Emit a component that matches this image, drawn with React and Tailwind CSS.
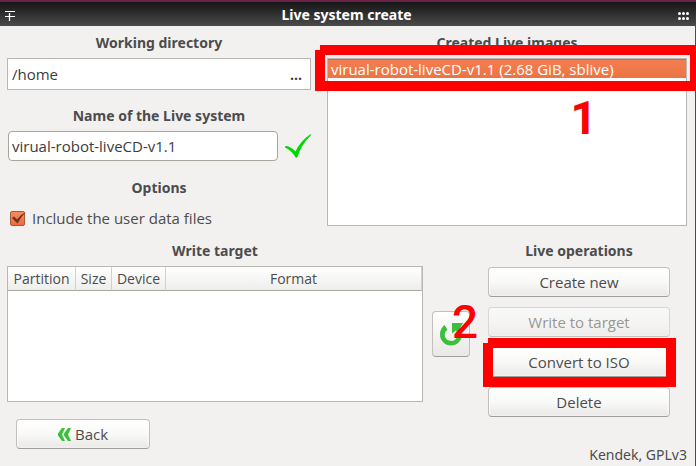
import { useState } from "react";

const buttonBase =
  "h-[30px] rounded border border-[#c3c0bb] border-b-[#a19e99] bg-linear-to-b from-white via-[#f9f9f8] to-[#e9e8e6] shadow-[inset_0_0_3px_#ffffff] text-[#4c4c4c]";

function Heading({ children, htmlFor, id }) {
  const Tag = htmlFor ? "label" : "h2";
  return (
    <Tag
      id={id}
      htmlFor={htmlFor}
      className="flex h-8 items-center justify-center font-['Noto_Sans',sans-serif] text-[14px] font-bold whitespace-nowrap"
    >
      {children}
    </Tag>
  );
}

function TitleBar() {
  return (
    <header className="border-t-2 border-[#6b2247]">
      <div className="flex h-6 items-center justify-between bg-linear-to-b from-[#161616] to-[#4b4b4b] pr-[7px] pl-[5px] text-white">
        <button aria-label="Window menu" className="mt-1">
          <svg width="10" height="10" viewBox="0 0 10 10" fill="none" stroke="currentColor" strokeWidth="1">
            <path d="M0 .5h10M0 5.500h10" />
            <path d="M4.500 2v8" strokeWidth="1.3" />
          </svg>
        </button>
        <h1 className="font-['Noto_Sans',sans-serif] text-[14px] font-bold">Live system create</h1>
        <button aria-label="Window grip" className="mt-1">
          <svg width="11" height="8" viewBox="0 0 11 8" fill="currentColor">
            <circle cx="1.5" cy="1.5" r="1.5" />
            <circle cx="5.5" cy="1.5" r="1.5" />
            <circle cx="9.5" cy="1.5" r="1.5" />
            <circle cx="1.5" cy="6.5" r="1.5" />
            <circle cx="5.5" cy="6.5" r="1.5" />
            <circle cx="9.5" cy="6.5" r="1.5" />
          </svg>
        </button>
      </div>
    </header>
  );
}

function Settings() {
  const [directory, setDirectory] = useState("/home");
  const [name, setName] = useState("virual-robot-liveCD-v1.1");
  return (
    <section>
      <Heading htmlFor="directory">Working directory</Heading>
      <div className="flex h-8 border border-[#bab8b3] bg-white text-[#3c3c3c]">
        <input
          id="directory"
          value={directory}
          onChange={(e) => setDirectory(e.target.value)}
          className="min-w-0 flex-1 px-1 text-[15px] outline-none"
        />
        <button aria-label="Browse" className="px-2 text-[14px] font-bold">
          ...
        </button>
      </div>
      <div className="mt-[9px]">
        <Heading htmlFor="name">Name of the Live system</Heading>
      </div>
      <div className="flex h-[30px] items-center gap-[7px] pl-px">
        <input
          id="name"
          value={name}
          onChange={(e) => setName(e.target.value)}
          className="h-full min-w-0 flex-1 rounded border border-[#a9a6a0] bg-white px-[3px] text-[15px] text-[#3c3c3c] outline-none"
        />
        <svg width="26" height="24" viewBox="0 0 26 24" fill="#00d800" className="shrink-0">
          <path d="M0 12.500Q1.500 11.500 3.500 12.500Q8 14.500 10.500 17.500Q15 7.500 25.500 0L26 1Q16 11 12.500 23L11 24Q6.500 16.500 0 13.500Z" />
        </svg>
      </div>
      <div className="mt-2.5">
        <Heading>Options</Heading>
      </div>
      <label className="flex h-[31px] items-center gap-[7px] pl-[3px] text-[15px]">
        <span className="grid size-[15px]">
          <input
            type="checkbox"
            defaultChecked
            className="peer col-start-1 row-start-1 size-[15px] appearance-none rounded-xs border border-[#a8583a] bg-white checked:bg-linear-to-b checked:from-[#f58a62] checked:to-[#ee6b3b]"
          />
          <svg
            viewBox="0 0 15 15"
            className="pointer-events-none col-start-1 row-start-1 size-[15px] overflow-visible opacity-0 peer-checked:opacity-100"
            fill="#6b3420"
          >
            <path d="M2 7L4 5.500L7 8.500Q10.500 3.500 16 1Q11 5.500 7.500 12.500Z" />
          </svg>
        </span>
        Include the user data files
      </label>
    </section>
  );
}

function LiveImages() {
  return (
    <section>
      <Heading id="images">Created Live images</Heading>
      <div className="relative">
        <ul
          role="listbox"
          aria-labelledby="images"
          className="h-[168px] border border-[#bab8b3] bg-white"
        >
          <li
            role="option"
            aria-selected="true"
            className="flex h-[19px] items-center border-t border-[#d96a3d] bg-linear-to-b from-[#f47e51] to-[#ec7443] pl-[3px] text-[15px] whitespace-nowrap text-white"
          >
            virual-robot-liveCD-v1.1 (2.68 GiB, sblive)
          </li>
        </ul>
        <div className="pointer-events-none absolute -top-[13px] -right-[13px] -left-3 h-[46px] border-10 border-[#ff0000] [clip-path:polygon(5px_0,100%_0,100%_100%,0_100%,0_5px,5px_5px)]" />
        <span className="pointer-events-none absolute top-[37px] right-[90px] font-[Roboto,sans-serif] text-[46px]/[46px] font-bold text-[#ff0000]">
          1
        </span>
      </div>
    </section>
  );
}

const headCell =
  "border-r border-b border-r-[#d3d1cd] border-b-[#a9a6a0] p-0 text-center font-normal";

function WriteTarget() {
  return (
    <section className="min-w-0 flex-1">
      <Heading id="target">Write target</Heading>
      <div className="h-[136px] border border-[#bab8b3] bg-white">
        <table aria-labelledby="target" className="w-full table-fixed border-separate border-spacing-0 text-[14px]/[20px]">
          <thead>
            <tr className="h-6 bg-linear-to-b from-white to-[#ededeb]">
              <th className={`${headCell} w-[68px]`}>Partition</th>
              <th className={`${headCell} w-9`}>Size</th>
              <th className={`${headCell} w-[54px]`}>Device</th>
              <th className={headCell}>Format</th>
            </tr>
          </thead>
        </table>
      </div>
    </section>
  );
}

function Operations() {
  return (
    <section className="w-[199px] shrink-0">
      <div className="w-[182px]">
        <Heading>Live operations</Heading>
        <div className="grid gap-2.5 pt-px text-[15px]">
          <button className={buttonBase}>Create new</button>
          <button disabled className={`${buttonBase} opacity-55`}>
            Write to target
          </button>
          <div className="relative grid">
            <button className={buttonBase}>Convert to ISO</button>
            <div className="pointer-events-none absolute -top-[9px] -right-1.5 -bottom-2.5 -left-[5px] border-10 border-[#ff0000] [clip-path:polygon(5px_0,100%_0,100%_100%,0_100%,0_5px,5px_5px)]" />
          </div>
          <button className={buttonBase}>Delete</button>
        </div>
      </div>
      <p className="mt-7 text-right font-['Noto_Sans',sans-serif] text-[14px]/[20px]">Kendek, GPLv3</p>
    </section>
  );
}

export default function App() {
  return (
    <div className="min-h-screen overflow-hidden bg-[#f2f1f0] font-['Open_Sans','Noto_Sans',sans-serif] text-[#4c4c4c]">
      <TitleBar />
      <main className="min-h-[440px] border-r border-[#4c4c4c] pr-2 pl-[7px]">
        <div className="grid grid-cols-[304fr_360fr] gap-4">
          <Settings />
          <LiveImages />
        </div>
        <div className="flex">
          <div className="flex min-w-0 flex-1 flex-col">
            <div className="flex gap-[9px]">
              <WriteTarget />
              <div className="relative flex items-center pt-8">
                <button
                  aria-label="Refresh"
                  className="flex h-[46px] w-[38px] items-center justify-center rounded border border-[#c3c0bb] border-b-[#a19e99] bg-linear-to-b from-white to-[#e9e8e6]"
                >
                  <svg width="24" height="24" viewBox="0 0 24 24">
                    <path d="M5.500 3A12 12 0 0 0 1 12.500A11 11 0 0 0 23 12.500Q23 9.500 21 6L24 1H13V11.500L17 8.500Q19 11 18 14.500A6.300 6.300 0 0 1 5.700 13Q5.700 9.500 8.500 7.500Z" fill="#3cc03c" />
                  </svg>
                </button>
                <span className="pointer-events-none absolute top-[65px] left-5 font-[Roboto,sans-serif] text-[46px]/[46px] font-medium text-[#ff0000]">
                  2
                </span>
              </div>
            </div>
            <div className="mt-[17px] pl-[9px]">
              <button className={`${buttonBase} flex w-[134px] items-center justify-center gap-1 text-[15px]`}>
                <svg width="13" height="13" viewBox="0 0 13 13" fill="#3cc03c">
                  <path d="M4 0H7L4 6.500L7 13H4L0 7.500V5.500Z" />
                  <path d="M10 0H13L10 6.500L13 13H10L6 7.500V5.500Z" />
                </svg>
                Back
              </button>
            </div>
          </div>
          <div className="pl-[18px]">
            <Operations />
          </div>
        </div>
      </main>
    </div>
  );
}
